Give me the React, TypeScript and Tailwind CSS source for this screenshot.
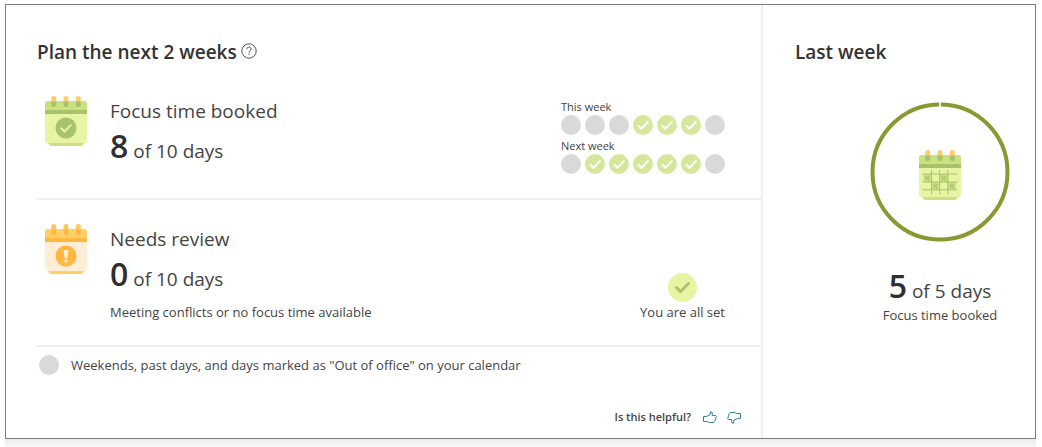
import React from "react";

type Palette = { body: string; top: string; band: string; foot: string; ring: string; ringBase: string };

const green: Palette = { body: "#e6f4a4", top: "#cbe180", band: "#a8c36c", foot: "#cbe180", ring: "#ffcd69", ringBase: "#a8c36c" };
const orange: Palette = { body: "#ffedd5", top: "#ffd068", band: "#ffb740", foot: "#ffd068", ring: "#ffc658", ringBase: "#ffb740" };

function Calendar({ palette, children }: { palette: Palette; children: React.ReactNode }) {
  return (
    <svg width="42" height="50" viewBox="0 0 42 50" aria-hidden="true" className="block shrink-0">
      <path d="M3 46.500h36l-1.200 2.300a2.400 2.400 0 0 1-2.100 1.200H6.300a2.400 2.400 0 0 1-2.100-1.200z" fill={palette.foot} />
      <path d="M0 17h42v27a3 3 0 0 1-3 3H3a3 3 0 0 1-3-3z" fill={palette.body} />
      <path d="M2.500 5h37A2.500 2.500 0 0 1 42 7.500V14H0V7.500A2.500 2.500 0 0 1 2.500 5z" fill={palette.top} />
      <rect y="14" width="42" height="4" fill={palette.band} />
      {[6.2, 18.5, 30.8].map((x) => (
        <g key={x}>
          <path d={`M${x} 5.500V2.500a2.500 2.500 0 0 1 5 0v3z`} fill={palette.ring} />
          <path d={`M${x} 5.500h5v3a2.500 2.500 0 0 1-5 0z`} fill={palette.ringBase} />
        </g>
      ))}
      {children}
    </svg>
  );
}

function BookedCalendar() {
  return (
    <Calendar palette={green}>
      <circle cx="21" cy="32" r="10.500" fill="#a8c36c" />
      <path d="M16.300 32.200l3.200 3.300 6.200-6.300" fill="none" stroke="#e6f4a4" strokeWidth="2" strokeLinecap="round" />
    </Calendar>
  );
}

function ReviewCalendar() {
  return (
    <Calendar palette={orange}>
      <circle cx="21" cy="32" r="10.500" fill="#ffb740" />
      <path d="M18.600 26h4.800l-1 8.200h-2.800z" fill="#ffedd5" />
      <circle cx="21" cy="37" r="1.700" fill="#ffedd5" />
    </Calendar>
  );
}

const crossed = [[4.500, 24], [20.700, 24], [12.600, 32], [28.800, 32]];

function WeekCalendar() {
  return (
    <Calendar palette={green}>
      {crossed.map(([x, y]) => (
        <g key={`${x}-${y}`}>
          <rect x={x} y={y} width="8" height="8" fill="#cbe180" />
          <path d={`M${x + 1.800} ${y + 1.800}l4.400 4.400m0-4.400l-4.400 4.400`} stroke="#a8c36c" strokeWidth="1.200" />
        </g>
      ))}
      <path d="M3.500 24h35M3.500 32h35M3.500 39.800h35M12.600 20v24M20.700 20v24M28.800 20v24" stroke="#a8c36c" strokeWidth="1" fill="none" />
    </Calendar>
  );
}

function Day({ booked }: { booked: boolean }) {
  return (
    <svg width="20" height="20" viewBox="0 0 20 20" className="block" role="img" aria-label={booked ? "Booked" : "Not counted"}>
      <circle cx="10" cy="10" r="10" fill={booked ? "#d5e79c" : "#d9d9d9"} />
      {booked && <path d="M4.900 10.200l3.500 3.500 7-7.300" fill="none" stroke="#fff" strokeWidth="2" />}
    </svg>
  );
}

function Week({ label, days }: { label: string; days: boolean[] }) {
  return (
    <div>
      <div className="h-[19px] text-[11px] leading-[22px]">{label}</div>
      <div className="flex gap-1">
        {days.map((booked, i) => (
          <Day key={i} booked={booked} />
        ))}
      </div>
    </div>
  );
}

function Count({ value, total }: { value: number; total: number }) {
  return (
    <p className="text-[19px] leading-10">
      <span className="text-[32px] font-semibold text-[#2f2f2f]">{value}</span> of {total} days
    </p>
  );
}

const thumb = "M.5 5.500h3L7 3.800 7.600.8 9.200 1.200V4.500h3.500l.6.800-1.600 5.300-.9.900H6.300L4.300 10.500H.5z";

function Thumb({ down }: { down?: boolean }) {
  return (
    <svg width="14" height="13" viewBox="0 0 14 13" fill="none" stroke="#2f8594" strokeWidth="1" strokeLinejoin="round" className="block" aria-hidden="true">
      <path d={thumb} transform={down ? "rotate(180 7 6.500)" : undefined} />
    </svg>
  );
}

export default function App() {
  return (
    <div className="bg-white pt-1 pr-1.5 pl-[5px] font-['Open_Sans','Noto_Sans',sans-serif] text-[#444]">
      <main className="flex border border-[#7c7c7c] bg-white">
        <section className="min-w-0 flex-1 border-r-2 border-[#efefef] pl-[31px]">
          <header className="flex items-center gap-1 pt-[33px]">
            <h1 className="text-[19px] leading-7 font-semibold text-[#333]">Plan the next 2 weeks</h1>
            <button aria-label="About this plan" className="-mt-0.5">
              <svg width="16" height="16" viewBox="0 0 16 16" fill="none" stroke="#555" strokeWidth="1" className="block">
                <circle cx="8" cy="8" r="7.200" />
                <path d="M5.900 6.200c0-1.300.9-2.100 2.100-2.100s2.100.8 2.100 1.900c0 1.700-2.100 1.800-2.100 3.700" />
                <path d="M8 10.700v1.300" />
              </svg>
            </button>
          </header>

          <section className="flex justify-between border-b-2 border-[#efefef] pt-[30px] pr-9 pb-6 pl-2">
            <div className="flex gap-[23px]">
              <BookedCalendar />
              <div>
                <h2 className="text-[19px] leading-[30px]">Focus time booked</h2>
                <Count value={8} total={10} />
              </div>
            </div>
            <div>
              <Week label="This week" days={[false, false, false, true, true, true, false]} />
              <Week label="Next week" days={[false, true, true, true, true, true, false]} />
            </div>
          </section>

          <section className="flex items-end justify-between border-b-2 border-[#efefef] pt-6 pr-9 pb-[23px] pl-2">
            <div className="flex gap-[23px]">
              <ReviewCalendar />
              <div>
                <h2 className="text-[19px] leading-[30px]">Needs review</h2>
                <Count value={0} total={10} />
                <p className="mt-[3px] text-[13px] leading-5">Meeting conflicts or no focus time available</p>
              </div>
            </div>
            <div className="flex flex-col items-center">
              <svg width="29" height="29" viewBox="0 0 29 29" className="block" aria-hidden="true">
                <circle cx="14.500" cy="14.500" r="14.500" fill="#e6f4a4" />
                <path d="M8.500 14.500l4 4 8-8" fill="none" stroke="#a8c36c" strokeWidth="3" strokeLinecap="round" />
              </svg>
              <p className="text-[13px] leading-5">You are all set</p>
            </div>
          </section>

          <div className="flex items-center gap-3 pt-2 pl-0.5">
            <span className="size-5 shrink-0 rounded-full bg-[#d9d9d9]" />
            <p className="text-[13px] leading-5">Weekends, past days, and days marked as "Out of office" on your calendar</p>
          </div>

          <footer className="flex items-center justify-end pt-8 pr-5 pb-[11px] text-[11px] leading-5">
            <span className="mr-3 font-semibold">Is this helpful?</span>
            <button aria-label="Yes" className="mr-2.5"><Thumb /></button>
            <button aria-label="No"><Thumb down /></button>
          </footer>
        </section>

        <aside className="w-[272px] shrink-0 pt-[33px]">
          <h1 className="pl-8 text-[19px] leading-7 font-semibold text-[#333]">Last week</h1>
          <div className="flex flex-col items-center pt-9 pl-[82px]">
            <div className="grid place-items-center">
              <svg width="140" height="140" viewBox="0 0 140 140" className="col-start-1 row-start-1 block" role="img" aria-label="5 of 5 days booked">
                <circle cx="70" cy="70" r="67.500" fill="none" stroke="#8a9a32" strokeWidth="4" />
                <path d="M70 0v5" stroke="#fff" strokeWidth="1.500" />
              </svg>
              <div className="col-start-1 row-start-1 mt-1.5"><WeekCalendar /></div>
            </div>
            <div className="mt-6"><Count value={5} total={5} /></div>
            <p className="-mt-1.5 text-[13px] leading-5">Focus time booked</p>
          </div>
        </aside>
      </main>
      <div className="h-2 bg-gradient-to-b from-[#ececec] to-[#f8f8f8]" />
    </div>
  );
}
